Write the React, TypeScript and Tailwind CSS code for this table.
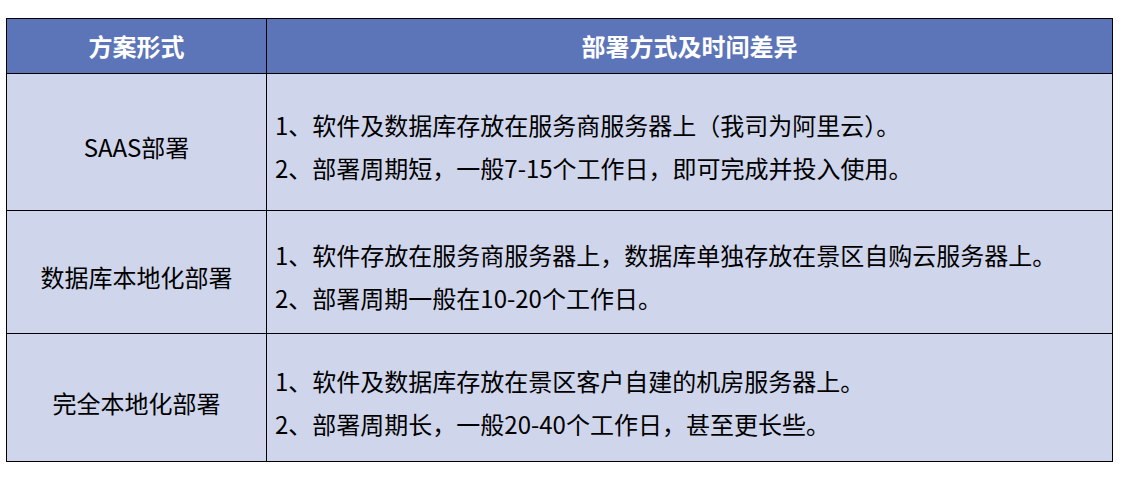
const rows = [
  {
    name: "SAAS部署",
    lines: [
      "1、软件及数据库存放在服务商服务器上（我司为阿里云）。",
      "2、部署周期短，一般7-15个工作日，即可完成并投入使用。",
    ],
    h: "h-[137px]",
  },
  {
    name: "数据库本地化部署",
    lines: [
      "1、软件存放在服务商服务器上，数据库单独存放在景区自购云服务器上。",
      "2、部署周期一般在10-20个工作日。",
    ],
    h: "h-[123px]",
  },
  {
    name: "完全本地化部署",
    lines: [
      "1、软件及数据库存放在景区客户自建的机房服务器上。",
      "2、部署周期长，一般20-40个工作日，甚至更长些。",
    ],
    h: "h-[128px]",
  },
];

export default function App() {
  return (
    <div className="w-[1122px] h-[483px] bg-white pt-[18px] pl-[6px] font-['Noto_Sans_CJK_SC',sans-serif] text-black">
      <div className="w-[1107px] border border-black">
        <div className="flex h-[54px] bg-[#5c74b8] text-white font-bold text-[24px]">
          <div className="w-[260px] shrink-0 border-r border-black flex items-center justify-center">方案形式</div>
          <div className="flex-1 flex items-center justify-center">部署方式及时间差异</div>
        </div>
        {rows.map((r) => (
          <div key={r.name} className={`flex ${r.h} bg-[#cfd5ea] border-t border-black text-[24px]`}>
            <div className="w-[260px] shrink-0 border-r border-black flex items-center justify-center pt-[10px]">
              {r.name}
            </div>
            <div className="flex-1 flex flex-col justify-center pl-[8px] pt-[8px] leading-[43px]">
              {r.lines.map((l) => (
                <p key={l}>{l}</p>
              ))}
            </div>
          </div>
        ))}
      </div>
    </div>
  );
}
